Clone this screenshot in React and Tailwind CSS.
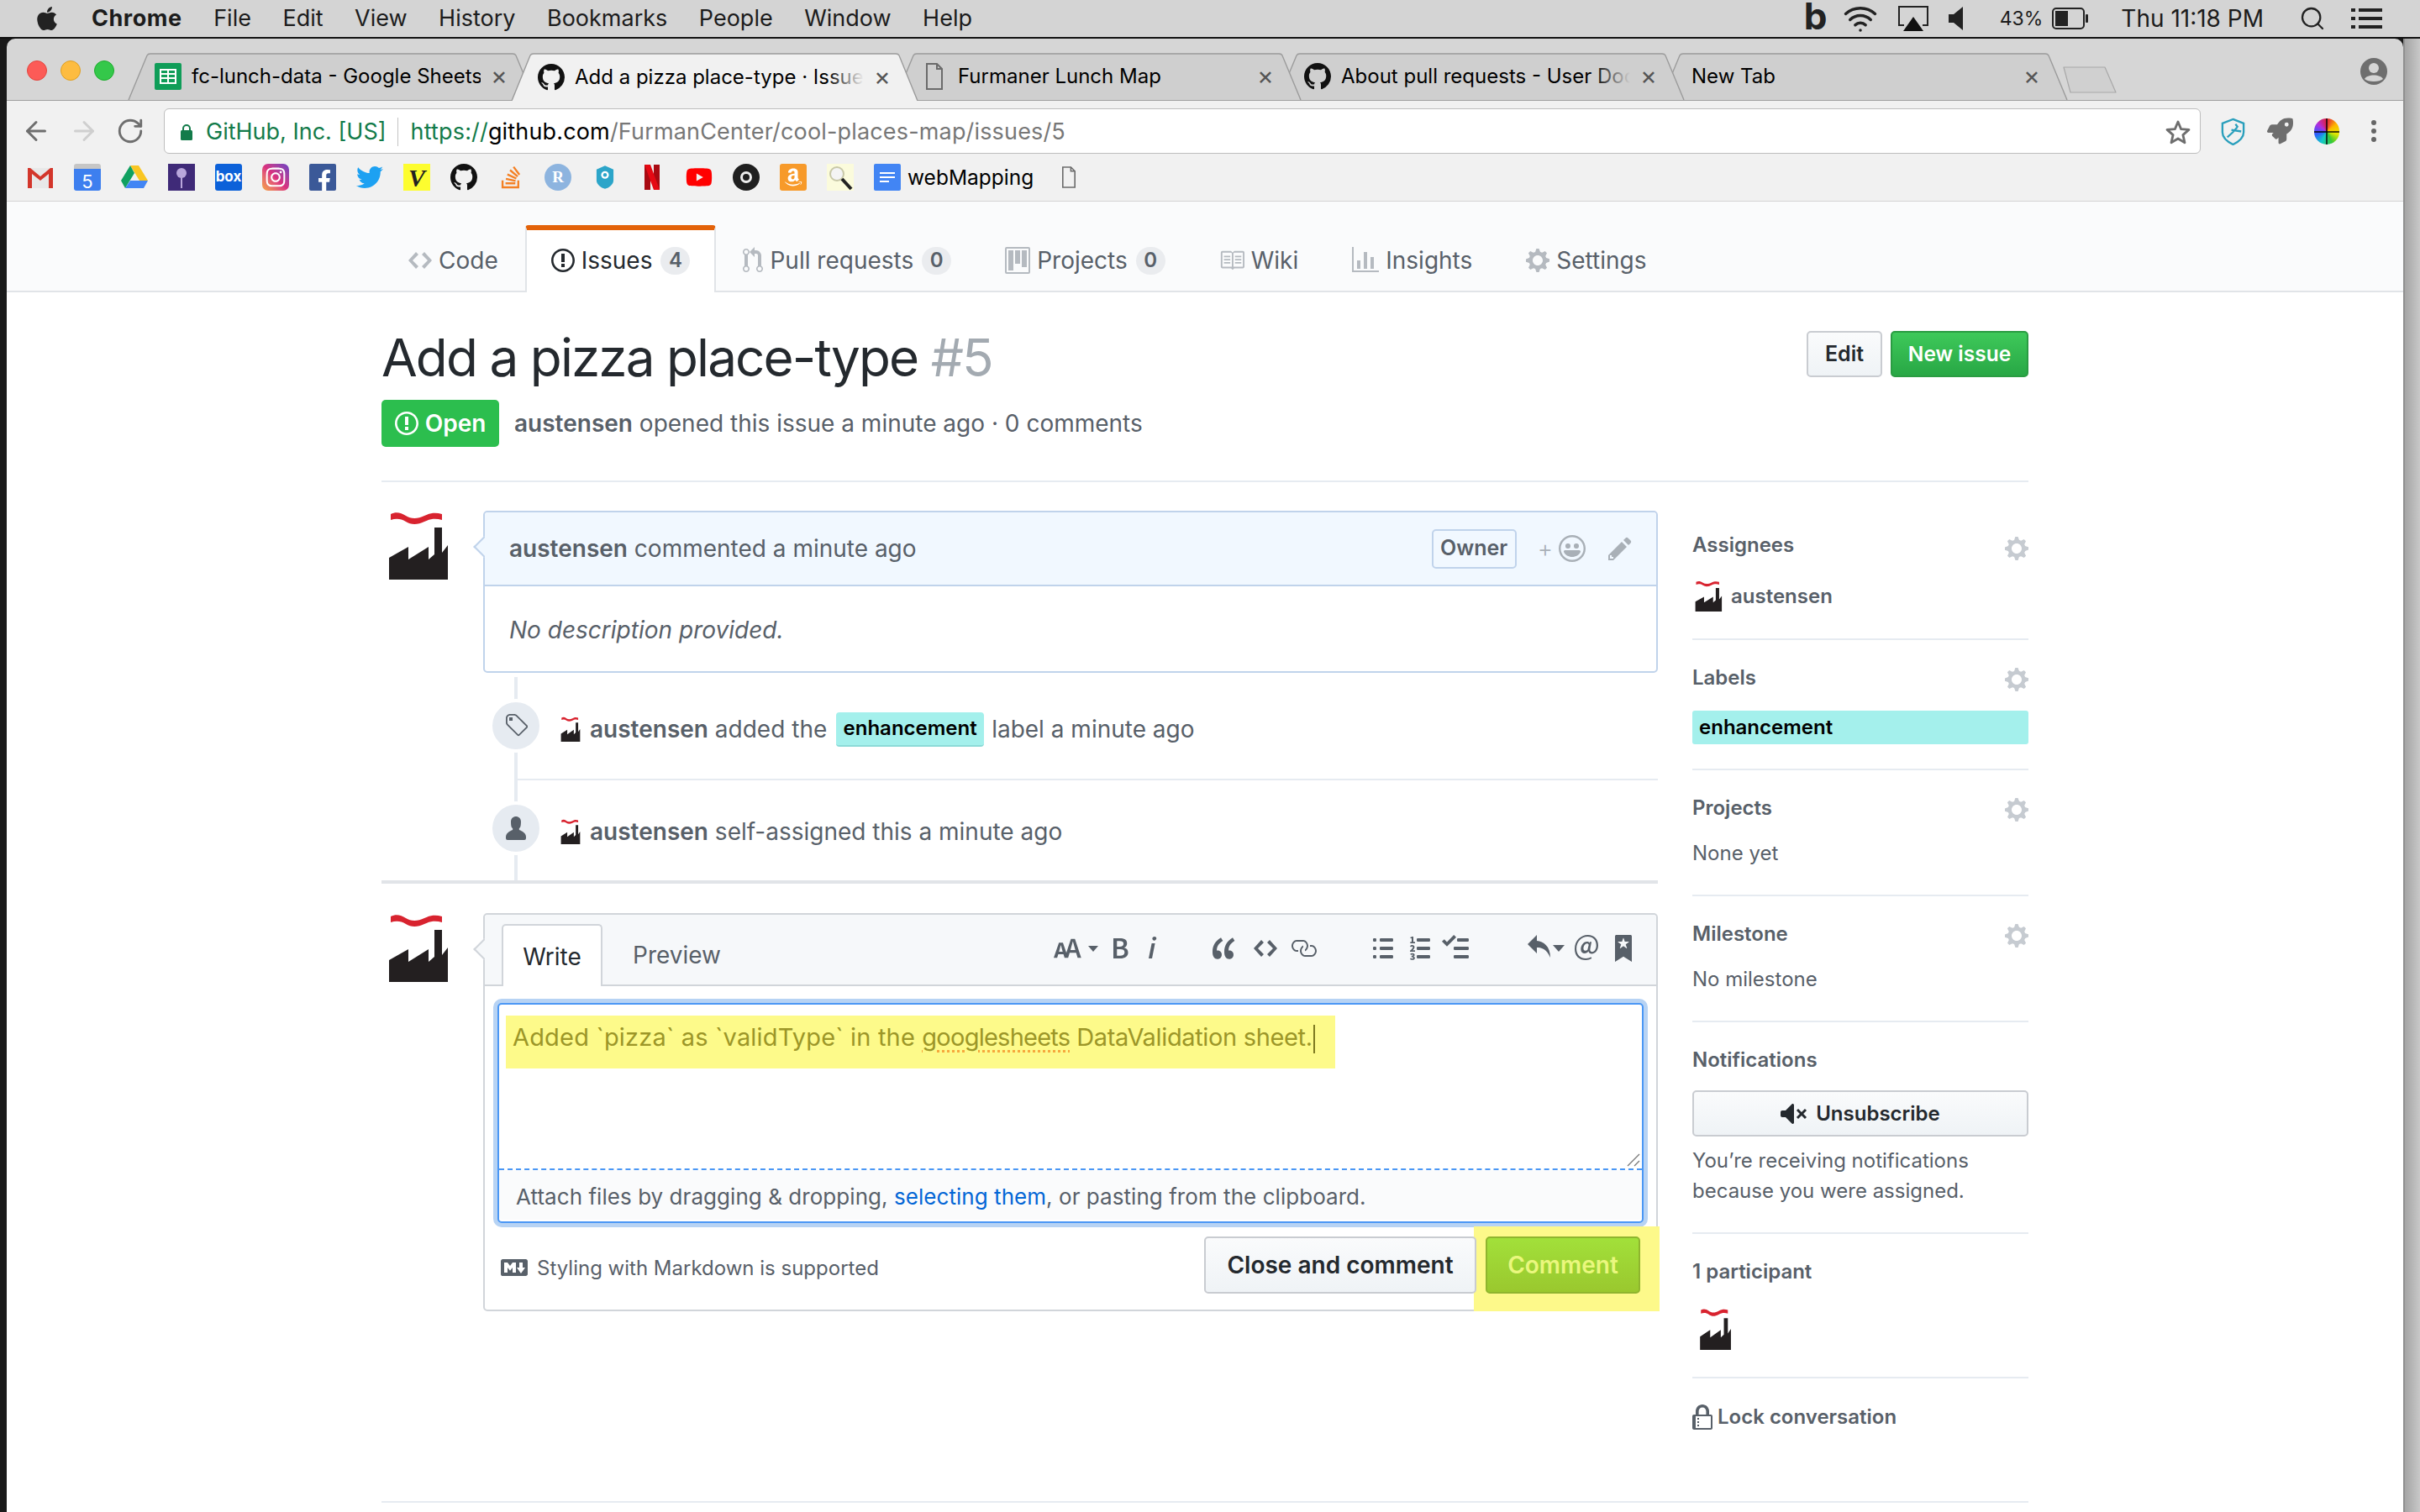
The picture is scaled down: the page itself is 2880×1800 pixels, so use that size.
import { ArrowLeft, ArrowRight, RotateCw, Search, Wifi } from "lucide-react";
import { FaAmazon, FaApple, FaFacebookF, FaInstagram, FaRocket, FaStackOverflow, FaTwitter, FaYoutube } from "react-icons/fa";

const paths = {
  code: "M9.5 3L8 4.5 11.5 8 8 11.5 9.5 13 14 8 9.5 3zm-5 0L0 8l4.5 5L6 11.5 2.5 8 6 4.5 4.5 3z",
  issue: "M7 2.3c3.14 0 5.7 2.56 5.7 5.7s-2.56 5.7-5.7 5.7A5.71 5.71 0 0 1 1.3 8c0-3.14 2.56-5.7 5.7-5.7zM7 1C3.14 1 0 4.14 0 8s3.14 7 7 7 7-3.14 7-7-3.14-7-7-7zm1 3H6v5h2V4zm0 6H6v2h2v-2z",
  pull: "M11 11.28V5c-.03-.78-.34-1.47-.94-2.06C9.46 2.35 8.78 2.03 8 2H7V0L4 3l3 3V4h1c.27.02.48.11.69.31.21.2.3.42.31.69v6.28A1.993 1.993 0 0 0 10 15a1.993 1.993 0 0 0 1-3.72zm-1 2.92c-.66 0-1.2-.55-1.2-1.2 0-.65.55-1.2 1.2-1.2.65 0 1.2.55 1.2 1.2 0 .65-.55 1.2-1.2 1.2zM4 3c0-1.11-.89-2-2-2a1.993 1.993 0 0 0-1 3.72v6.56A1.993 1.993 0 0 0 2 15a1.993 1.993 0 0 0 1-3.72V4.72c.59-.34 1-.98 1-1.72zm-.8 10c0 .66-.55 1.2-1.2 1.2-.65 0-1.2-.55-1.2-1.2 0-.65.55-1.2 1.2-1.2.65 0 1.2.55 1.2 1.2zM2 4.2C1.34 4.2.8 3.65.8 3c0-.65.55-1.2 1.2-1.2.65 0 1.2.55 1.2 1.2 0 .65-.55 1.2-1.2 1.2z",
  project: "M10 12h3V2h-3v10zm-4-2h3V2H6v8zm-4 4h3V2H2v12zm-1 1h13V1H1v14zM14 0H1a1 1 0 0 0-1 1v14a1 1 0 0 0 1 1h13a1 1 0 0 0 1-1V1a1 1 0 0 0-1-1z",
  book: "M3 5h4v1H3V5zm0 3h4V7H3v1zm0 2h4V9H3v1zm11-5h-4v1h4V5zm0 2h-4v1h4V7zm0 2h-4v1h4V9zm2-6v9c0 .55-.45 1-1 1H9.5l-1 1-1-1H2c-.55 0-1-.45-1-1V3c0-.55.45-1 1-1h5.5l1 1 1-1H15c.55 0 1 .45 1 1zm-8 .5L7.5 3H2v9h6V3.5zm7-.5H9.5l-.5.5V12h6V3z",
  graph: "M16 14v1H0V0h1v14h15zM5 13H3V8h2v5zm4 0H7V3h2v10zm4 0h-2V6h2v7z",
  gear: "M14 8.77v-1.6l-1.94-.64-.45-1.09.88-1.84-1.13-1.13-1.81.91-1.09-.45-.69-1.92h-1.6l-.63 1.94-1.11.45-1.84-.88-1.13 1.13.91 1.81-.45 1.09L0 7.23v1.59l1.94.64.45 1.09-.88 1.84 1.13 1.13 1.81-.91 1.09.45.69 1.92h1.59l.63-1.94 1.11-.45 1.84.88 1.13-1.13-.92-1.81.47-1.09L14 8.75v.02zM7 11c-1.66 0-3-1.34-3-3s1.34-3 3-3 3 1.34 3 3-1.34 3-3 3z",
  tag: "M7.73 1.73C7.26 1.26 6.62 1 5.96 1H3.5C2.13 1 1 2.13 1 3.5v2.47c0 .66.27 1.3.73 1.77l6.06 6.06c.39.39 1.02.39 1.41 0l4.59-4.59a.996.996 0 0 0 0-1.41L7.73 1.73zM2.38 7.09c-.31-.3-.47-.7-.47-1.13V3.5c0-.88.72-1.59 1.59-1.59h2.47c.42 0 .83.16 1.13.47l6.14 6.13-4.73 4.73-6.13-6.15zM3.01 3h2v2H3V3h.01z",
  person: "M12 14.002a.998.998 0 0 1-.998.998H1.001A1 1 0 0 1 0 13.999V13c0-2.633 4-4 4-4s.229-.409 0-1c-.841-.62-.944-1.59-1-4 .173-2.413 1.867-3 3-3s2.827.586 3 3c-.056 2.41-.159 3.38-1 4-.229.59 0 1 0 1s4 1.367 4 4v1.002z",
  pencil: "M0 12v3h3l8-8-3-3-8 8zm3 2H1v-2h1v1h1v1zm10.3-9.3L12 6 9 3l1.3-1.3a.996.996 0 0 1 1.41 0l1.59 1.59c.39.39.39 1.02 0 1.41z",
  smiley: "M8 0C3.58 0 0 3.58 0 8s3.58 8 8 8 8-3.58 8-8-3.58-8-8-8zm4.81 12.81a6.72 6.72 0 0 1-2.17 1.45c-.83.36-1.72.53-2.64.53-.92 0-1.81-.17-2.64-.53-.81-.34-1.55-.83-2.17-1.45a6.773 6.773 0 0 1-1.45-2.17A6.59 6.59 0 0 1 1.21 8c0-.92.17-1.81.53-2.64.34-.81.83-1.55 1.45-2.17.62-.62 1.36-1.11 2.17-1.45A6.59 6.59 0 0 1 8 1.21c.92 0 1.81.17 2.64.53.81.34 1.55.83 2.17 1.45.62.62 1.11 1.36 1.45 2.17.36.83.53 1.72.53 2.64 0 .92-.17 1.81-.53 2.64-.34.81-.83 1.55-1.45 2.17zM4 6.8v-.59c0-.66.53-1.19 1.2-1.19h.59c.66 0 1.19.53 1.19 1.19v.59c0 .67-.53 1.2-1.19 1.2H5.2C4.53 8 4 7.47 4 6.8zm5 0v-.59c0-.66.53-1.19 1.2-1.19h.59c.66 0 1.19.53 1.19 1.19v.59c0 .67-.53 1.2-1.19 1.2h-.59C9.53 8 9 7.47 9 6.8zm4 3.2c-.72 1.88-2.91 3-5 3s-4.28-1.13-5-3c-.14-.39.23-1 .66-1h8.59c.41 0 .89.61.75 1z",
  markdown: "M14.85 3H1.15C.52 3 0 3.52 0 4.15v7.69C0 12.48.52 13 1.15 13h13.69c.64 0 1.15-.52 1.15-1.15v-7.7C16 3.52 15.48 3 14.85 3zM9 11H7V8L5.5 9.92 4 8v3H2V5h2l1.5 2L7 5h2v6zm2.99.5L9.5 8H11V5h2v3h1.5l-2.51 3.5z",
  lock: "M4 13H3v-1h1v1zm8-6v7c0 .55-.45 1-1 1H1c-.55 0-1-.45-1-1V7c0-.55.45-1 1-1h1V4c0-2.2 1.8-4 4-4s4 1.8 4 4v2h1c.55 0 1 .45 1 1zM3.8 6h4.41V4c0-1.22-.98-2.2-2.2-2.2-1.22 0-2.2.98-2.2 2.2v2H3.8zM11 7H2v7h9V7zM4 8H3v1h1V8zm0 2H3v1h1v-1z",
  mute: "M8 2.81v10.38c0 .67-.81 1-1.28.53L3 10H1c-.55 0-1-.45-1-1V7c0-.55.45-1 1-1h2l3.72-3.72C7.19 1.81 8 2.14 8 2.81zm7.53 3.22l-1.06-1.06-1.97 1.97-1.97-1.97-1.06 1.06L11.44 8 9.47 9.97l1.06 1.06 1.97-1.97 1.97 1.97 1.06-1.06L13.56 8l1.97-1.97z",
  textSize: "M13.62 9.08L12.1 3.66h-.06l-1.5 5.42h3.08zM5.7 10.13S4.68 6.52 4.53 6.02h-.08l-1.13 4.11H5.7zM17.31 14h-2.25l-.95-3.25h-4.07L9.09 14H6.84l-.69-2.33H2.87L2.17 14H0l3.3-9.59h2.5l2.17 6.34L10.86 2h2.52l3.94 12h-.01z",
  bold: "M1 2h3.83c2.48 0 4.3.75 4.3 2.95 0 1.14-.63 2.23-1.67 2.61v.06c1.33.3 2.3 1.23 2.3 2.86 0 2.39-1.97 3.52-4.61 3.52H1V2zm3.66 4.95c1.67 0 2.38-.66 2.38-1.69 0-1.17-.78-1.61-2.34-1.61H3.13v3.3h1.53zm.27 5.39c1.77 0 2.75-.64 2.75-1.98 0-1.27-.95-1.81-2.75-1.81h-1.8v3.8h1.8v-.01z",
  italic: "M2.81 5h1.98L3 14H1l1.81-9zm.36-2.7c0-.7.58-1.3 1.33-1.3.56 0 1.13.38 1.13 1.03 0 .75-.59 1.3-1.33 1.3-.58 0-1.13-.38-1.13-1.03z",
  quote: "M6.16 3.5C3.73 5.06 2.55 6.67 2.55 9.36c.16-.05.3-.05.44-.05 1.27 0 2.5.86 2.5 2.41 0 1.61-1.03 2.61-2.5 2.61-1.9 0-2.99-1.52-2.99-4.25 0-3.8 1.75-6.53 5.02-8.42L6.16 3.5zm7 0c-2.43 1.56-3.61 3.17-3.61 5.86.16-.05.3-.05.44-.05 1.27 0 2.5.86 2.5 2.41 0 1.61-1.03 2.61-2.5 2.61-1.89 0-2.98-1.52-2.98-4.25 0-3.8 1.75-6.53 5.02-8.42l1.14 1.84h-.01z",
  link: "M4 9h1v1H4c-1.5 0-3-1.69-3-3.5S2.55 3 4 3h4c1.45 0 3 1.69 3 3.5 0 1.41-.91 2.72-2 3.25V8.59c.58-.45 1-1.27 1-2.09C10 5.22 8.98 4 8 4H4c-.98 0-2 1.22-2 2.5S3 9 4 9zm9-3h-1v1h1c1 0 2 1.22 2 2.5S13.98 12 13 12H9c-.98 0-2-1.22-2-2.5 0-.83.42-1.64 1-2.09V6.25c-1.09.53-2 1.84-2 3.25C6 11.31 7.55 13 9 13h4c1.45 0 3-1.69 3-3.5S14.5 6 13 6z",
  ul: "M2 13c0 .59 0 1-.59 1H.59C0 14 0 13.59 0 13c0-.59 0-1 .59-1h.81c.59 0 .59.41.59 1H2zm2.59-9h6.81c.59 0 .59-.41.59-1 0-.59 0-1-.59-1H4.59C4 2 4 2.41 4 3c0 .59 0 1 .59 1zM1.41 7H.59C0 7 0 7.41 0 8c0 .59 0 1 .59 1h.81c.59 0 .59-.41.59-1 0-.59 0-1-.59-1h.01zm0-5H.59C0 2 0 2.41 0 3c0 .59 0 1 .59 1h.81c.59 0 .59-.41.59-1 0-.59 0-1-.59-1h.01zm10 5H4.59C4 7 4 7.41 4 8c0 .59 0 1 .59 1h6.81c.59 0 .59-.41.59-1 0-.59 0-1-.59-1h.01zm0 5H4.59C4 12 4 12.41 4 13c0 .59 0 1 .59 1h6.81c.59 0 .59-.41.59-1 0-.59 0-1-.59-1h.01z",
  ol: "M12 13c0 .59 0 1-.59 1H4.59C4 14 4 13.59 4 13c0-.59 0-1 .59-1h6.81c.59 0 .59.41.59 1H12zM4.59 4h6.81c.59 0 .59-.41.59-1 0-.59 0-1-.59-1H4.59C4 2 4 2.41 4 3c0 .59 0 1 .59 1zm6.81 3H4.59C4 7 4 7.41 4 8c0 .59 0 1 .59 1h6.81c.59 0 .59-.41.59-1 0-.59 0-1-.59-1zM2 1h-.72c-.3.19-.58.25-1.03.34V2H1v2.14H.16V5H3v-.86H2V1zm.25 8.13c-.17 0-.45.03-.66.06.53-.56 1.14-1.25 1.14-1.89C2.71 6.52 2.17 6 1.37 6c-.59 0-.97.2-1.38.64l.58.58c.19-.19.38-.38.64-.38.28 0 .48.16.48.52 0 .53-.77 1.2-1.7 2.06V10h3v-.88h-.75l.01.01zm-.08 3.69v-.03c.44-.19.64-.47.64-.86 0-.7-.56-1.11-1.44-1.11-.48 0-.89.19-1.28.52l.55.64c.25-.2.44-.31.69-.31.27 0 .42.13.42.36 0 .27-.2.44-.86.44v.75c.83 0 .98.17.98.47 0 .25-.23.38-.58.38-.28 0-.56-.14-.81-.38l-.48.66c.3.36.77.56 1.41.56.83 0 1.53-.41 1.53-1.16-.02-.45-.27-.78-.77-.92v-.01z",
  task: "M15.41 9H7.59C7 9 7 8.59 7 8c0-.59 0-1 .59-1h7.81c.59 0 .59.41.59 1 0 .59 0 1-.59 1h.01zM9.59 4C9 4 9 3.59 9 3c0-.59 0-1 .59-1h5.81c.59 0 .59.41.59 1 0 .59 0 1-.59 1H9.59zM0 3.91l1.41-1.3L3 4.2 7.09 0 8.5 1.41 3 6.91l-3-3zM7.59 12h7.81c.59 0 .59.41.59 1 0 .59 0 1-.59 1H7.59C7 14 7 13.59 7 13c0-.59 0-1 .59-1z",
  reply: "M6 3.5c3.92.44 8 3.125 8 10-2.312-5.062-4.75-6-8-6V11L.5 5.5 6 0v3.5z",
  mention: "M6.58 15c1.25 0 2.52-.31 3.56-.94l-.42-.94c-.84.52-1.89.83-3.03.83-3.23 0-5.64-2.08-5.64-5.72 0-4.37 3.23-7.18 6.58-7.18 3.44 0 5.22 2.19 5.22 5.2 0 2.39-1.34 3.86-2.5 3.86-1.05 0-1.36-.73-1.05-2.19l.73-3.75H8.98l-.11.72c-.41-.63-.94-.83-1.56-.83-2.19 0-3.66 2.39-3.66 4.38 0 1.67.94 2.61 2.3 2.61.84 0 1.67-.53 2.3-1.25.11.94.94 1.45 1.98 1.45 1.67 0 3.77-1.67 3.77-5C14 2.61 11.59 0 7.83 0 3.66 0 0 3.33 0 8.33 0 12.6 2.83 15 6.58 15zm-.31-5.64c-.63 0-1.05-.42-1.05-1.25 0-1.45.94-3.02 2.09-3.02.42 0 .73.21 1.05.73l-.73 3.02c-.52.41-.94.52-1.36.52z",
  bookmark: "M9 0H1C.27 0 0 .27 0 1v15l5-3.09L10 16V1c0-.73-.27-1-1-1zm-.78 4.25L6.36 5.61l.72 2.16c.06.22-.02.28-.2.17L5 6.6 3.12 7.94c-.19.11-.25.05-.2-.17l.72-2.16-1.86-1.36c-.17-.16-.14-.23.09-.23l2.3-.03.7-2.16h.25l.7 2.16 2.3.03c.23 0 .27.08.09.23h.01z",
  github: "M8 0C3.58 0 0 3.58 0 8c0 3.54 2.29 6.53 5.47 7.59.4.07.55-.17.55-.38 0-.19-.01-.82-.01-1.49-2.01.37-2.53-.49-2.69-.94-.09-.23-.48-.94-.82-1.13-.28-.15-.68-.52-.01-.53.63-.01 1.08.58 1.23.82.72 1.21 1.87.87 2.33.66.07-.52.28-.87.51-1.07-1.78-.2-3.64-.89-3.64-3.95 0-.87.31-1.59.82-2.15-.08-.2-.36-1.02.08-2.12 0 0 .67-.21 2.2.82.64-.18 1.32-.27 2-.27.68 0 1.36.09 2 .27 1.53-1.04 2.2-.82 2.2-.82.44 1.1.16 1.92.08 2.12.51.56.82 1.27.82 2.15 0 3.07-1.87 3.75-3.65 3.95.29.25.54.73.54 1.48 0 1.07-.01 1.93-.01 2.2 0 .21.15.46.55.38A8.013 8.013 0 0 0 16 8c0-4.42-3.58-8-8-8z",
};

function Oct({ name, vw = 16, w, h = 32, className = "" }) {
  return (
    <svg viewBox={`0 0 ${vw} 16`} width={w ?? (vw * h) / 16} height={h} fill="currentColor" className={`shrink-0 ${className}`}>
      <path fillRule="evenodd" d={paths[name]} />
    </svg>
  );
}

function Factory({ w = 80, h = 82 }) {
  return (
    <svg viewBox="0 0 80 82" width={w} height={h} preserveAspectRatio="none" className="shrink-0">
      <path d="M10 4C16 1 22 2 28 6C34 10 42 10 50 6C58 2 64 2 71 4V11C64 9 58 9 50 13C42 17 34 17 28 13C22 9 16 9 10 11Z" fill="#d8232f" />
      <path d="M8 56L31 43V58L55 43V58L62 52V20H71V50L78 41V82H8Z" fill="#231f20" />
    </svg>
  );
}

function FileGlyph({ w = 20, h = 32 }) {
  return (
    <svg viewBox="0 0 20 32" width={w} height={h} fill="none" stroke="#6b6b6b" strokeWidth="2" className="shrink-0">
      <path d="M1 1H13L19 7V31H1Z" />
      <path d="M13 1V7H19" />
    </svg>
  );
}

function MenuBar() {
  return (
    <div className="h-[46px] bg-[#d4d4d4] border-b-2 border-[#111] flex items-center pl-[42px] pr-[45px] text-[27px] text-[#1c1c1c] shrink-0">
      <FaApple className="w-[28px] h-[32px] text-[#222] mr-[39px]" />
      <div className="flex items-center gap-[37.5px]">
        <span className="font-bold tracking-[0.02em]">Chrome</span>
        <span>File</span>
        <span>Edit</span>
        <span>View</span>
        <span>History</span>
        <span>Bookmarks</span>
        <span>People</span>
        <span>Window</span>
        <span>Help</span>
      </div>
      <div className="ml-auto flex items-center">
        <span className="text-[44px] font-bold leading-[44px] w-[24px] mr-[22px] -mt-[6px] text-[#222]">b</span>
        <Wifi size={42} strokeWidth={2} className="text-[#222] mr-[24px]" />
        <svg viewBox="0 0 36 32" width="36" height="32" className="mr-[24px] shrink-0">
          <path d="M7 24H1V2H35V24H29" fill="none" stroke="#222" strokeWidth="2" />
          <path d="M18 14L30 31H6Z" fill="#111" />
        </svg>
        <svg viewBox="0 0 17 28" width="17" height="28" className="mr-[44px] shrink-0">
          <path d="M0 9H6L17 0V28L6 19H0Z" fill="#222" />
        </svg>
        <span className="text-[23px] mr-[11px]">43%</span>
        <svg viewBox="0 0 44 26" width="44" height="26" className="mr-[38px] shrink-0">
          <rect x="1" y="1" width="37" height="24" rx="4" fill="none" stroke="#222" strokeWidth="2" />
          <rect x="4" y="4" width="15" height="18" fill="#222" />
          <rect x="40" y="8" width="3" height="10" rx="1" fill="#222" />
        </svg>
        <span className="mr-[42px] text-[28px]">Thu 11:18 PM</span>
        <Search size={32} strokeWidth={1.7} className="text-[#222] mr-[30px]" />
        <svg viewBox="0 0 37 24" width="37" height="24" className="shrink-0" fill="#222">
          <rect y="0" width="5" height="4" /><rect x="9" y="0" width="28" height="4" />
          <rect y="10" width="5" height="4" /><rect x="9" y="10" width="28" height="4" />
          <rect y="20" width="5" height="4" /><rect x="9" y="20" width="28" height="4" />
        </svg>
      </div>
    </div>
  );
}

function TabShape({ active }) {
  return (
    <svg viewBox="0 0 485 57" preserveAspectRatio="none" className="absolute inset-0 w-full h-full">
      <path
        d="M1 57L23 3Q24 1 27 1H458Q461 1 462 3L484 57"
        fill={active ? "#f1f1f1" : "#cfcfcf"}
        stroke="#9b9b9b"
        strokeWidth="1.4"
      />
    </svg>
  );
}

function Tab({ icon, title, active, fade, className }) {
  return (
    <div className={`relative w-[485px] -mr-[29px] shrink-0 ${className}`}>
      <TabShape active={active} />
      <div className="relative h-full flex items-center pl-[32px] pr-[35px] text-[24px] text-black">
        {icon}
        <div className="relative flex-1 overflow-hidden whitespace-nowrap">
          {title}
          {fade && <div className={`absolute right-0 top-0 bottom-0 w-[44px] bg-gradient-to-r from-transparent ${active ? "to-[#f1f1f1]" : "to-[#cfcfcf]"}`} />}
        </div>
        <span className="text-[30px] leading-none text-[#555] ml-[12px] w-[18px] -mt-[2px]">×</span>
      </div>
    </div>
  );
}

function TabStrip() {
  return (
    <div className="h-[74px] bg-[#d6d6d6] border-b border-[#9f9f9f] rounded-t-[10px] flex items-end pl-[144px] relative shrink-0">
      <div className="absolute left-[24px] top-[26px] flex gap-[16px]">
        <div className="w-[24px] h-[24px] rounded-full bg-[#fc5b57] border border-[#e2463f]" />
        <div className="w-[24px] h-[24px] rounded-full bg-[#fdbc40] border border-[#dfa023]" />
        <div className="w-[24px] h-[24px] rounded-full bg-[#34c84a] border border-[#1dac2c]" />
      </div>
      <Tab
        className="h-[56px] z-[4] mb-0"
        title="fc-lunch-data - Google Sheets"
        icon={
          <svg viewBox="0 0 32 32" width="32" height="32" className="mr-[12px] shrink-0">
            <rect width="32" height="32" rx="2" fill="#0f9d58" />
            <path d="M6 7H26V25H6ZM8 9V12H15V9ZM17 9V12H24V9ZM8 14V17H15V14ZM17 14V17H24V14ZM8 19V23H15V19ZM17 19V23H24V19Z" fill="#fff" fillRule="evenodd" />
          </svg>
        }
      />
      <Tab
        active
        fade
        className="h-[57px] -mb-px z-[5]"
        title="Add a pizza place-type · Issues"
        icon={<Oct name="github" h={32} className="mr-[12px] text-[#111]" />}
      />
      <Tab
        className="h-[56px] z-[3]"
        title="Furmaner Lunch Map"
        icon={<span className="mr-[18px] ml-[6px] flex"><FileGlyph /></span>}
      />
      <Tab
        fade
        className="h-[56px] z-[2]"
        title="About pull requests - User Documentation"
        icon={<Oct name="github" h={32} className="mr-[12px] text-[#111]" />}
      />
      <Tab className="h-[56px] z-[1]" title="New Tab" icon={<span className="w-[5px]" />} />
      <svg viewBox="0 0 64 32" width="64" height="32" className="absolute left-[2447px] top-[33px]">
        <path d="M1 1H50L63 31H9Z" fill="#d0d0d0" stroke="#a8a8a8" strokeWidth="1.2" strokeLinejoin="round" />
      </svg>
      <svg viewBox="0 0 32 32" width="32" height="32" className="absolute right-[19px] top-[23px]">
        <circle cx="16" cy="16" r="16" fill="#6e6e6e" />
        <circle cx="16" cy="12" r="6" fill="#d6d6d6" />
        <path d="M5 25C8 19 24 19 27 25C23 29 9 29 5 25Z" fill="#d6d6d6" />
      </svg>
    </div>
  );
}

function Toolbar() {
  return (
    <div className="h-[63px] bg-[#f1f1f1] flex items-center pl-[17px] pt-[9px] shrink-0">
      <ArrowLeft size={36} strokeWidth={2} className="text-[#6e6e6e]" />
      <ArrowRight size={36} strokeWidth={2} className="text-[#cfcfcf] ml-[21px]" />
      <RotateCw size={34} strokeWidth={2} className="text-[#6e6e6e] ml-[20px]" />
      <div className="ml-[23px] w-[2424px] h-[54px] bg-white border border-[#bdbdbd] rounded-[6px] flex items-center pl-[18px] pr-[11px] pt-[2px] text-[27px]">
        <svg viewBox="0 0 16 20" width="16" height="20" className="shrink-0">
          <path d="M4 9V6a4 4 0 0 1 8 0V9" fill="none" stroke="#137b4a" strokeWidth="2" />
          <rect x="1" y="8" width="14" height="12" rx="1.5" fill="#137b4a" />
        </svg>
        <span className="ml-[15px] text-[#137b4a]">GitHub, Inc. [US]</span>
        <div className="w-px h-[34px] bg-[#c4c4c4] ml-[13px] mr-[15px]" />
        <span className="tracking-[0.006em]">
          <span className="text-[#137b4a]">https://</span>
          <span className="text-black">github.com</span>
          <span className="text-[#777]">/FurmanCenter/cool-places-map/issues/5</span>
        </span>
        <svg viewBox="0 0 30 30" width="30" height="30" className="ml-auto shrink-0">
          <path d="M15 3L18.6 11.6L28 12.4L20.9 18.6L23 27.8L15 23L7 27.8L9.1 18.6L2 12.4L11.4 11.6Z" fill="none" stroke="#6e6e6e" strokeWidth="2.8" strokeLinejoin="round" />
        </svg>
      </div>
      <svg viewBox="0 0 30 34" width="31" height="33" className="ml-[23px] shrink-0">
        <path d="M15 2L28 7V18C28 25 21 30 15 33C9 30 2 25 2 18V7Z" fill="none" stroke="#2a9fbc" strokeWidth="2.4" />
        <path d="M8 24C13 20 17 16 20 12M13 15L25 17M18 8L21 12" fill="none" stroke="#2a9fbc" strokeWidth="2.4" />
      </svg>
      <FaRocket className="w-[31px] h-[32px] ml-[25px] text-[#6e6e6e]" />
      <div className="relative ml-[25px] w-[30px] h-[31px] rounded-full bg-[conic-gradient(#e01f3d,#ffb300,#e8e800,#35c935,#12c9c9,#2d5bff,#b02ee0,#e01f3d)] shrink-0">
        <div className="absolute left-[14px] top-0 w-[2px] h-full bg-black/70" />
        <div className="absolute top-[15px] left-0 h-[2px] w-full bg-black/70" />
      </div>
      <div className="ml-[38px] flex flex-col gap-[4px]">
        <div className="w-[6px] h-[6px] rounded-full bg-[#666]" />
        <div className="w-[6px] h-[6px] rounded-full bg-[#666]" />
        <div className="w-[6px] h-[6px] rounded-full bg-[#666]" />
      </div>
    </div>
  );
}

function Fav({ className = "", children }) {
  return <div className={`w-[32px] h-[32px] shrink-0 flex items-center justify-center overflow-hidden ${className}`}>{children}</div>;
}

function Bookmarks() {
  return (
    <div className="h-[57px] bg-[#f1f1f1] border-b border-[#d4d4d4] flex items-center pl-[24px] gap-[24px] shrink-0">
      <Fav>
        <svg viewBox="0 0 32 26" width="32" height="26">
          <path d="M1 2H31V26H1Z" fill="#e8e8e8" />
          <path d="M1 26V2H4L16 12L28 2H31V26H26V9L16 17L6 9V26Z" fill="#d3362b" />
        </svg>
      </Fav>
      <Fav className="bg-[#3d7fef] rounded-[3px] text-white text-[22px] pt-[4px] border-t-[6px] border-[#c6c6c6]">5</Fav>
      <Fav>
        <svg viewBox="0 0 32 30" width="32" height="30">
          <path d="M11 1H21L32 19H22Z" fill="#f9c623" />
          <path d="M11 1L0 19L5 28L16 10Z" fill="#10a060" />
          <path d="M5 28H27L32 19H11Z" fill="#4285f4" />
        </svg>
      </Fav>
      <Fav className="bg-[#3f2a78]">
        <svg viewBox="0 0 32 32" width="32" height="32">
          <circle cx="16" cy="11" r="6" fill="#b9a6dc" />
          <rect x="15" y="14" width="2" height="15" fill="#b9a6dc" />
        </svg>
      </Fav>
      <Fav className="bg-[#0c61d9] rounded-[3px] text-white text-[17px] font-bold">box</Fav>
      <Fav className="rounded-[7px] bg-gradient-to-tr from-[#f5a33a] via-[#d92f7f] to-[#6a3bc4] text-white">
        <FaInstagram size={26} />
      </Fav>
      <Fav className="bg-[#3b5998] rounded-[2px] text-white items-end">
        <FaFacebookF size={26} className="mb-[-1px] ml-[4px]" />
      </Fav>
      <Fav className="text-[#1da1f2]"><FaTwitter size={32} /></Fav>
      <Fav className="bg-[#fdfd2f] text-[#222] text-[30px] font-bold italic [font-family:'Liberation_Serif',serif]">V</Fav>
      <Fav className="text-[#111]"><Oct name="github" h={32} /></Fav>
      <Fav className="text-[#f48024]"><FaStackOverflow size={30} /></Fav>
      <Fav className="bg-[#8db4df] rounded-full text-white text-[19px] font-bold [font-family:'Liberation_Serif',serif]">R</Fav>
      <Fav>
        <svg viewBox="0 0 24 32" width="22" height="30">
          <path d="M12 1L23 6V20C23 26 16 30 12 31C8 30 1 26 1 20V6Z" fill="#2ca5c9" />
          <circle cx="12" cy="13" r="5" fill="#fff" />
          <circle cx="12" cy="13" r="2.4" fill="#2ca5c9" />
        </svg>
      </Fav>
      <Fav>
        <svg viewBox="0 0 20 32" width="20" height="32">
          <path d="M1 1H8V31H1Z" fill="#a80a12" />
          <path d="M12 1H19V31H12Z" fill="#a80a12" />
          <path d="M1 1H8L19 31H12Z" fill="#e50914" />
        </svg>
      </Fav>
      <Fav className="text-[#ff0000]"><FaYoutube size={32} /></Fav>
      <Fav className="rounded-full bg-[#1f1f1f]">
        <div className="w-[14px] h-[14px] rounded-full border-[3px] border-[#eee]" />
      </Fav>
      <Fav className="bg-[#f79a2a] rounded-[3px] text-white"><FaAmazon size={24} /></Fav>
      <Fav className="bg-[#fbfbdc]">
        <svg viewBox="0 0 32 32" width="32" height="32">
          <circle cx="12" cy="12" r="8" fill="#f4f4f4" stroke="#c8c8a8" strokeWidth="2" />
          <path d="M18 18L29 30" stroke="#222" strokeWidth="4" />
        </svg>
      </Fav>
      <div className="flex items-center gap-[8px]">
        <Fav className="bg-[#4285f4] rounded-[2px]">
          <svg viewBox="0 0 32 32" width="32" height="32" fill="#fff">
            <rect x="7" y="10" width="18" height="2" /><rect x="7" y="15" width="18" height="2" /><rect x="7" y="20" width="11" height="2" />
          </svg>
        </Fav>
        <span className="text-[24.5px] text-black">webMapping</span>
      </div>
      <span className="ml-[10px] flex"><FileGlyph w={16} h={26} /></span>
    </div>
  );
}

function RepoNav() {
  const item = "flex items-center gap-[8px] px-[32px] pt-[6px] text-[#586069]";
  const iconCls = "text-[#b5bac0]";
  const count = "ml-[2px] w-[35px] h-[33px] rounded-full bg-[#eaecef] flex items-center justify-center text-[24px] font-semibold text-[#586069]";
  return (
    <div className="h-[108px] bg-[#fafbfc] border-b-2 border-[#e1e4e8] pl-[446px] flex items-end text-[28px] shrink-0">
      <div className="flex items-stretch h-[80px] -mb-[2px] pb-[2px]">
        <div className={item}><Oct name="code" vw={14} h={32} w={28} className={iconCls} />Code</div>
        <div className="flex items-center gap-[8px] px-[29px] -mb-[2px] pb-[2px] bg-white border-x-2 border-[#e1e4e8] border-t-[6px] border-t-[#e36209] rounded-t-[4px] text-[#24292e]">
          <Oct name="issue" vw={14} h={32} w={28} />
          Issues
          <span className={count}>4</span>
        </div>
        <div className={item}><Oct name="pull" vw={12} h={32} className={iconCls} />Pull requests<span className={count}>0</span></div>
        <div className={item}><Oct name="project" vw={15} h={32} className={iconCls} />Projects<span className={count}>0</span></div>
        <div className={item}><Oct name="book" h={32} w={30} className={iconCls} />Wiki</div>
        <div className={item}><Oct name="graph" h={32} className={iconCls} />Insights</div>
        <div className={item}><Oct name="gear" vw={14} h={32} w={28} className={iconCls} />Settings</div>
      </div>
    </div>
  );
}

function Section({ title, gear, last, first, children }) {
  return (
    <div className={`${first ? "pt-[25px]" : "pt-[29px]"} ${last ? "" : "border-b-2 border-[#e6ebf1]"}`}>
      <div className="h-[32px] flex items-center justify-between text-[24px] font-semibold text-[#586069]">
        {title}
        {gear && <Oct name="gear" vw={14} h={32} w={28} className={`text-[#c6cbd1] ${first ? "mt-[8px]" : "mt-[3px]"}`} />}
      </div>
      {children}
    </div>
  );
}

function Sidebar() {
  return (
    <div className="w-[400px] text-[24px] text-[#586069]">
      <Section first title="Assignees" gear>
        <div className="mt-[26px] pb-[32px] flex items-center gap-[10px] font-semibold">
          <Factory w={36} h={37} />
          austensen
        </div>
      </Section>
      <Section title="Labels" gear>
        <div className="mt-[23px] mb-[29px] h-[40px] rounded-[3px] bg-[#a4f0ec] text-black font-semibold flex items-center pl-[8px]">enhancement</div>
      </Section>
      <Section title="Projects" gear>
        <div className="mt-[21px] pb-[32px] leading-[34px]">None yet</div>
      </Section>
      <Section title="Milestone" gear>
        <div className="mt-[21px] pb-[32px] leading-[34px]">No milestone</div>
      </Section>
      <Section title="Notifications">
        <div className="mt-[20px] h-[55px] rounded-[5px] border-2 border-[#c9ccd1] bg-gradient-to-b from-[#fafbfc] to-[#eff3f6] flex items-center justify-center gap-[10px] text-[#24292e] font-semibold">
          <Oct name="mute" h={32} w={32} />
          Unsubscribe
        </div>
        <div className="mt-[11px] pb-[31px] leading-[36px]">You’re receiving notifications<br />because you were assigned.</div>
      </Section>
      <Section title="1 participant">
        <div className="mt-[27px] pb-[32px] pl-[5px]"><Factory w={42} h={50} /></div>
      </Section>
      <div className="pt-[30px] flex items-center gap-[6px] h-[62px] font-semibold">
        <Oct name="lock" vw={12} h={32} w={24} className="mt-[1px]" />
        Lock conversation
      </div>
    </div>
  );
}

function Caret({ border }) {
  return (
    <div className={`absolute -left-[10px] top-[32px] w-[18px] h-[18px] rotate-45 border-l-2 border-b-2 ${border}`} />
  );
}

function TimelineRow({ icon, badgePos, children, divider }) {
  return (
    <div className={`relative flex items-center pl-[49px] pt-[3px] text-[28px] text-[#586069] ${divider}`}>
      <div className={`absolute -left-[34px] w-[64px] h-[64px] rounded-full bg-[#e6ebf1] border-4 border-white flex items-center justify-center text-[#586069] ${badgePos}`}>
        {icon}
      </div>
      <Factory w={26} h={30} />
      <div className="ml-[11px] flex items-center whitespace-pre">{children}</div>
    </div>
  );
}

function Toolbtn({ name, vw, w, h = 32, className = "" }) {
  return <Oct name={name} vw={vw} w={w} h={h} className={className} />;
}

function CommentForm() {
  return (
    <div className="flex gap-[40px] mt-[35px] text-[#586069]">
      <div className="w-[81px] pl-[1px] shrink-0"><Factory /></div>
      <div className="relative w-[1398px] h-[474px] border-2 border-[#d1d5da] rounded-[5px] bg-white">
        <Caret border="border-[#d1d5da] bg-[#f6f8fa]" />
        <div className="relative h-[85px] bg-[#f6f8fa] border-b-2 border-[#d1d5da] rounded-t-[4px] flex items-end pl-[20px]">
          <div className="w-[120px] h-[74px] -mb-[2px] bg-white border-2 border-b-0 border-[#d1d5da] rounded-t-[5px] flex items-center justify-center text-[28px] text-[#24292e] pt-[1px]">Write</div>
          <div className="ml-[36px] h-[74px] flex items-center text-[28px] pt-[3px]">Preview</div>
          <div className="ml-auto self-start mt-[24px] pr-[29px] flex items-center text-[#586069]">
            <Toolbtn name="textSize" vw={18} w={34} />
            <div className="ml-[7px] w-0 h-0 border-x-[6px] border-x-transparent border-t-[7px] border-t-[#586069]" />
            <Toolbtn name="bold" vw={10} w={20} className="ml-[16px]" />
            <Toolbtn name="italic" vw={6} w={12} className="ml-[22px]" />
            <Toolbtn name="quote" vw={14} w={28} className="ml-[66px]" />
            <Toolbtn name="code" vw={14} w={28} className="ml-[21px]" />
            <Toolbtn name="link" w={32} className="ml-[15px]" />
            <Toolbtn name="ul" vw={12} w={24} className="ml-[67px]" />
            <Toolbtn name="ol" vw={12} w={24} className="ml-[20px]" />
            <Toolbtn name="task" w={32} className="ml-[14px]" />
            <Toolbtn name="reply" vw={14} w={28} className="ml-[69px]" />
            <div className="ml-[3px] w-0 h-0 border-x-[7px] border-x-transparent border-t-[8px] border-t-[#586069]" />
            <Toolbtn name="mention" vw={14} w={30} className="ml-[11px]" />
            <Toolbtn name="bookmark" vw={10} w={20} className="ml-[19px]" />
          </div>
        </div>
        <div className="mx-[15px] mt-[20px] w-[1364px] h-[262px] border-2 border-[#4a97f5] rounded-[5px] shadow-[0_0_0_5px_#b7d3f4] bg-white">
          <div className="relative h-[197px] border-b-2 border-dashed border-[#4a97f5] pt-[13px] pl-[8px]">
            <div className="w-[987px] h-[63px] bg-[#fdfa8a] pl-[8px] text-[29px] leading-[52px] text-[#9c9628] whitespace-nowrap">
              <span className="tracking-[0.006em]">Added `pizza` as `validType` in the </span>
              <span className="tracking-[-0.026em] underline decoration-dotted decoration-[3px] decoration-[#f6a83c] underline-offset-[5px]">googlesheets</span>
              <span className="tracking-[-0.012em]"> DataValidation sheet.</span>
              <span className="inline-block w-[2px] h-[34px] bg-[#7d7920] align-middle ml-[1px]" />
            </div>
            <svg viewBox="0 0 16 16" width="16" height="16" className="absolute right-[2px] bottom-[2px]">
              <path d="M1 15L15 1M9 15L15 9" stroke="#777" strokeWidth="1.3" />
            </svg>
          </div>
          <div className="h-[59px] bg-[#fafbfc] rounded-b-[4px] flex items-center pl-[20px] pt-[3px] text-[26px] tracking-[0.05px]">
            Attach files by dragging &amp; dropping,&nbsp;<span className="text-[#0366d6]">selecting them</span>, or pasting from the clipboard.
          </div>
        </div>
        <div className="flex items-center mt-[16px] pl-[19px] pr-[19px]">
          <Oct name="markdown" h={32} w={32} className="mt-[6px]" />
          <span className="ml-[11px] text-[24px] mt-[8px] self-center">Styling with Markdown is supported</span>
          <div className="ml-auto relative z-10 w-[324px] h-[68px] rounded-[5px] border-2 border-[#c9ccd1] bg-gradient-to-b from-[#fafbfc] to-[#eff3f6] flex items-center justify-center text-[28px] font-semibold text-[#24292e]">Close and comment</div>
          <div className="relative ml-[11px]">
            <div className="absolute -left-[14px] -right-[23px] -top-[12px] -bottom-[21px] bg-[#fdf98a]" />
            <div className="relative w-[184px] h-[68px] rounded-[5px] border-2 border-[#8fb52e] bg-gradient-to-b from-[#a2e03a] to-[#9ac82e] flex items-center justify-center text-[28px] font-semibold text-[#eaf77e]">Comment</div>
          </div>
        </div>
      </div>
    </div>
  );
}

function Page() {
  return (
    <div className="flex-1 bg-white flex flex-col overflow-hidden [font-family:Inter,sans-serif]">
      <RepoNav />
      <div className="pl-[446px] w-[2406px] shrink-0">
        <div className="border-b-2 border-[#e6ebf1] h-[226px] w-[1960px] pt-[38px]">
          <div className="flex items-start justify-between">
            <h1 className="text-[62px] leading-[80px] font-normal text-[#24292e] tracking-[-0.031em]">
              Add a pizza place-type <span className="text-[#a3aab1]">#5</span>
            </h1>
            <div className="flex gap-[10px] mt-[8px]">
              <div className="w-[90px] h-[55px] rounded-[5px] border-2 border-[#c9ccd1] bg-gradient-to-b from-[#fafbfc] to-[#eff3f6] flex items-center justify-center text-[25px] font-semibold text-[#24292e]">Edit</div>
              <div className="w-[164px] h-[55px] rounded-[5px] border-2 border-[#2a9c42] bg-gradient-to-b from-[#3ec95a] to-[#28a745] flex items-center justify-center text-[24.5px] font-semibold text-white">New issue</div>
            </div>
          </div>
          <div className="flex items-center mt-[10px]">
            <div className="w-[140px] h-[56px] rounded-[5px] bg-[#2cbe4e] text-white flex items-center justify-center gap-[8px] text-[28px] font-semibold">
              <Oct name="issue" vw={14} w={28} h={32} />
              Open
            </div>
            <div className="ml-[18px] text-[28px] text-[#586069]">
              <span className="font-semibold">austensen</span> opened this issue a minute ago · 0 comments
            </div>
          </div>
        </div>
        <div className="flex gap-[41px] mt-[34px] w-[1960px] h-[1181px] border-b-2 border-[#e6ebf1]">
          <div className="w-[1519px] shrink-0">
            <div className="flex gap-[40px]">
              <div className="w-[81px] pl-[1px] shrink-0"><Factory /></div>
              <div className="relative w-[1398px] h-[193px] border-2 border-[#c0d3eb] rounded-[5px] bg-white">
                <Caret border="border-[#c0d3eb] bg-[#f1f8ff]" />
                <div className="relative h-[88px] bg-[#f1f8ff] border-b-2 border-[#c0d3eb] rounded-t-[4px] flex items-center pl-[29px] pr-[29px] text-[28px] text-[#586069]">
                  <span className="font-semibold">austensen</span>&nbsp;commented a minute ago
                  <div className="ml-auto w-[101px] h-[47px] rounded-[5px] border-2 border-[#c0d3eb] flex items-center justify-center text-[25px] font-semibold">Owner</div>
                  <span className="ml-[25px] text-[#a9b0b7] text-[28px] font-light">+</span>
                  <Oct name="smiley" h={32} w={32} className="ml-[7px] text-[#a9b0b7]" />
                  <Oct name="pencil" vw={14} h={32} w={28} className="ml-[27px] text-[#a9b0b7]" />
                </div>
                <div className="pl-[29px] pt-[31px] text-[28px] italic text-[#586069]">No description provided.</div>
              </div>
            </div>
            <div className="ml-[158px] mt-[5px] border-l-4 border-[#e6ebf1] h-[242px] flex flex-col">
              <TimelineRow
                divider="h-[123px] border-b-2 border-[#e6ebf1]"
                badgePos="top-[26px]"
                icon={<Oct name="tag" vw={14} h={32} w={28} />}
              >
                <span className="font-semibold">austensen</span> added the{" "}
                <span className="ml-[3px] mr-[9px] h-[41px] w-[176px] justify-center rounded-[4px] bg-[#a4f0ec] border-b-2 border-[#8cdad7] text-[24px] text-black font-semibold flex items-center">enhancement</span>
                label a minute ago
              </TimelineRow>
              <TimelineRow divider="h-[119px]" badgePos="top-[25px]" icon={<Oct name="person" vw={12} h={32} w={24} />}>
                <span className="font-semibold">austensen</span> self-assigned this a minute ago
              </TimelineRow>
            </div>
            <div className="border-t-4 border-[#e1e4e8]" />
            <CommentForm />
          </div>
          <Sidebar />
        </div>
      </div>
    </div>
  );
}

export default function App() {
  return (
    <div className="w-[2880px] h-[1800px] overflow-hidden bg-[#1a1a1a] flex flex-col [font-family:Inter,sans-serif]">
      <MenuBar />
      <div className="flex-1 flex min-h-0">
        <div className="w-[8px] shrink-0 bg-[#1a1a1a]" />
        <div className="w-[2854px] shrink-0 flex flex-col border-r-2 border-[#8f8f8f]">
          <TabStrip />
          <Toolbar />
          <Bookmarks />
          <Page />
        </div>
        <div className="flex-1 bg-gradient-to-r from-[#a5a5a5] to-[#c8c8c8]" />
      </div>
    </div>
  );
}
